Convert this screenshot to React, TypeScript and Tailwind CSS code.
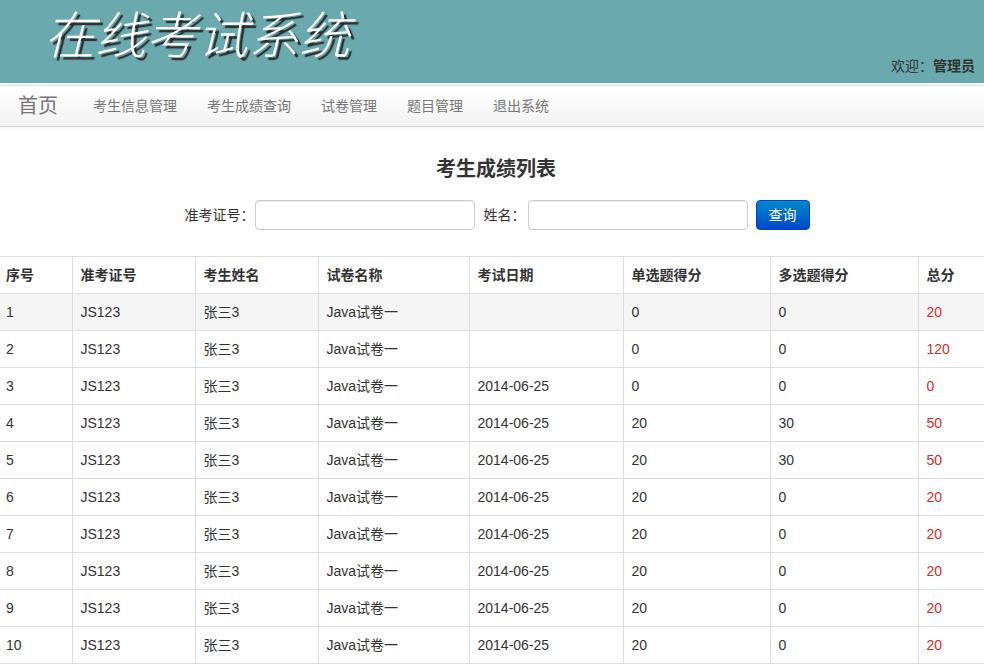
import React from "react";

const rows = [
  { no: 1, date: "", single: 0, multi: 0, total: 20 },
  { no: 2, date: "", single: 0, multi: 0, total: 120 },
  { no: 3, date: "2014-06-25", single: 0, multi: 0, total: 0 },
  { no: 4, date: "2014-06-25", single: 20, multi: 30, total: 50 },
  { no: 5, date: "2014-06-25", single: 20, multi: 30, total: 50 },
  { no: 6, date: "2014-06-25", single: 20, multi: 0, total: 20 },
  { no: 7, date: "2014-06-25", single: 20, multi: 0, total: 20 },
  { no: 8, date: "2014-06-25", single: 20, multi: 0, total: 20 },
  { no: 9, date: "2014-06-25", single: 20, multi: 0, total: 20 },
  { no: 10, date: "2014-06-25", single: 20, multi: 0, total: 20 },
];

const headers = ["序号", "准考证号", "考生姓名", "试卷名称", "考试日期", "单选题得分", "多选题得分", "总分"];
const widths = ["w-[72px]", "w-[123px]", "w-[123px]", "w-[151px]", "w-[154px]", "w-[147px]", "w-[148px]", "w-[66px]"];

const navItems = ["考生信息管理", "考生成绩查询", "试卷管理", "题目管理", "退出系统"];

export default function App() {
  return (
    <div className="min-h-screen bg-white text-[#333] text-[14px] font-['Liberation_Sans','Noto_Sans_CJK_SC',sans-serif]">
      {/* header */}
      <div className="h-[83px] bg-[#6aa9ad] flex justify-between">
        <div className="pl-[44px] pt-[11px] text-[51px] leading-none italic font-light text-white [text-shadow:3px_3px_1px_#2a2a2a]">
          在线考试系统
        </div>
        <div className="self-end pb-[6px] pr-[9px] text-[14px] text-[#333]">
          欢迎：<b className="font-bold">管理员</b>
        </div>
      </div>

      {/* navbar */}
      <div className="mt-[2px] h-[42px] border-t border-[#e3e3e3] border-b border-b-[#d4d4d4] bg-gradient-to-b from-white to-[#f2f2f2] shadow-[0_1px_4px_rgba(0,0,0,0.065)] flex items-center">
        <span className="pl-[18px] pr-[20px] text-[20px] text-[#777]">首页</span>
        {navItems.map(n => (
          <span key={n} className="px-[15px] text-[14px] text-[#777]">
            {n}
          </span>
        ))}
      </div>

      {/* title */}
      <h2 className="mt-[28px] pl-[8px] text-center text-[20px] leading-[28px] font-bold text-[#333]">考生成绩列表</h2>

      {/* search */}
      <div className="mt-[17px] pl-[10px] flex items-center justify-center">
        <span className="text-[14px]">准考证号：</span>
        <input className="w-[220px] h-[30px] border border-[#ccc] rounded-[4px] shadow-[inset_0_1px_1px_rgba(0,0,0,0.075)] px-[6px] outline-none" />
        <span className="text-[14px] ml-[9px] mr-[2px]">姓名：</span>
        <input className="w-[220px] h-[30px] border border-[#ccc] rounded-[4px] shadow-[inset_0_1px_1px_rgba(0,0,0,0.075)] px-[6px] outline-none" />
        <button className="ml-[8px] w-[54px] h-[30px] rounded-[4px] bg-gradient-to-b from-[#0088cc] to-[#0044cc] border border-[#0044cc] text-white text-[14px]">
          查询
        </button>
      </div>

      {/* table */}
      <table className="mt-[26px] w-full border-collapse table-fixed">
        <thead>
          <tr className="border-t border-[#ddd]">
            {headers.map((h, i) => (
              <th
                key={h}
                className={`${widths[i]} text-left font-bold h-[37px] py-0 ${i === 0 ? "pl-[6px]" : "pl-[8px] border-l border-[#ddd]"}`}
              >
                {h}
              </th>
            ))}
          </tr>
        </thead>
        <tbody>
          {rows.map(r => {
            const cells = [r.no, "JS123", "张三3", "Java试卷一", r.date, r.single, r.multi, r.total];
            return (
              <tr key={r.no} className={`border-t border-b border-[#ddd] ${r.no === 1 ? "bg-[#f5f5f5]" : ""}`}>
                {cells.map((c, i) => (
                  <td
                    key={i}
                    className={`h-[37px] py-0 ${i === 0 ? "pl-[6px]" : "pl-[8px] border-l border-[#ddd]"} ${i === 7 ? "text-[#dd2a2a]" : ""}`}
                  >
                    {c}
                  </td>
                ))}
              </tr>
            );
          })}
        </tbody>
      </table>
    </div>
  );
}
